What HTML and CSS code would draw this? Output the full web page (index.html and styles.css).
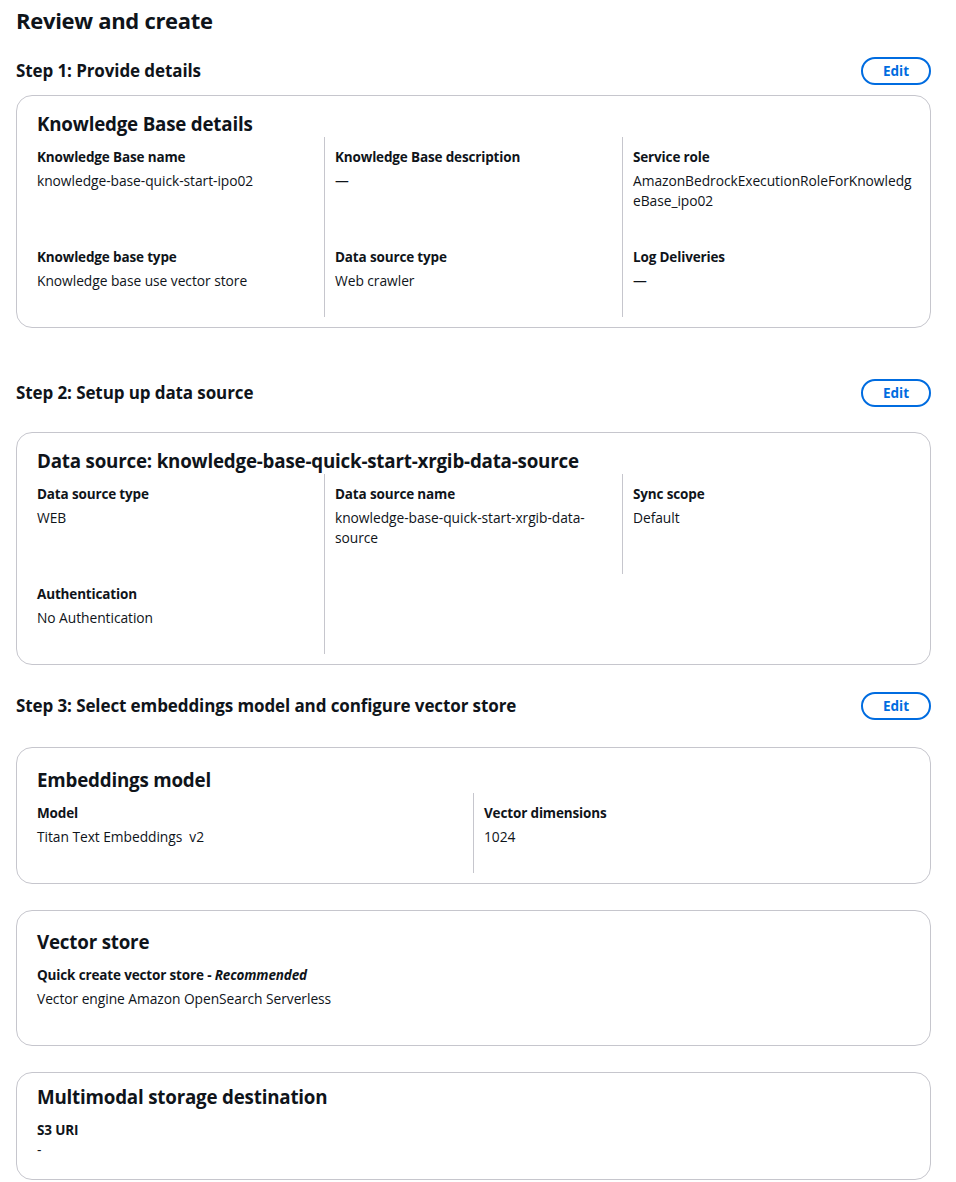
FILE: index.html
```html
<!DOCTYPE html>
<html lang="en">
<head>
<meta charset="utf-8">
<title>Review and create</title>
<link rel="stylesheet" href="styles.css">
</head>
<body>
<main class="page">
  <h1 class="page-title">Review and create</h1>

  <section class="step step-first">
    <div class="step-header">
      <h2 class="step-title">Step 1: Provide details</h2>
      <button class="edit-btn" type="button">Edit</button>
    </div>
    <div class="card">
      <h3 class="card-title">Knowledge Base details</h3>
      <div class="kv-grid cols-3">
        <div class="kv-cell">
          <div class="kv-label">Knowledge Base name</div>
          <div class="kv-value">knowledge-base-quick-start-ipo02</div>
        </div>
        <div class="kv-cell divided">
          <div class="kv-label">Knowledge Base description</div>
          <div class="kv-value">—</div>
        </div>
        <div class="kv-cell divided">
          <div class="kv-label">Service role</div>
          <div class="kv-value">AmazonBedrockExecutionRoleForKnowledgeBase_ipo02</div>
        </div>
        <div class="kv-cell">
          <div class="kv-label">Knowledge base type</div>
          <div class="kv-value">Knowledge base use vector store</div>
        </div>
        <div class="kv-cell divided">
          <div class="kv-label">Data source type</div>
          <div class="kv-value">Web crawler</div>
        </div>
        <div class="kv-cell divided">
          <div class="kv-label">Log Deliveries</div>
          <div class="kv-value">—</div>
        </div>
      </div>
    </div>
  </section>

  <section class="step step-second">
    <div class="step-header">
      <h2 class="step-title">Step 2: Setup up data source</h2>
      <button class="edit-btn" type="button">Edit</button>
    </div>
    <div class="card">
      <h3 class="card-title">Data source: knowledge-base-quick-start-xrgib-data-source</h3>
      <div class="kv-grid cols-3">
        <div class="kv-cell">
          <div class="kv-label">Data source type</div>
          <div class="kv-value">WEB</div>
        </div>
        <div class="kv-cell divided">
          <div class="kv-label">Data source name</div>
          <div class="kv-value">knowledge-base-quick-start-xrgib-data-source</div>
        </div>
        <div class="kv-cell divided">
          <div class="kv-label">Sync scope</div>
          <div class="kv-value">Default</div>
        </div>
        <div class="kv-cell">
          <div class="kv-label">Authentication</div>
          <div class="kv-value">No Authentication</div>
        </div>
        <div class="kv-cell divided"></div>
      </div>
    </div>
  </section>

  <section class="step">
    <div class="step-header">
      <h2 class="step-title">Step 3: Select embeddings model and configure vector store</h2>
      <button class="edit-btn" type="button">Edit</button>
    </div>
    <div class="card card-tall">
      <h3 class="card-title">Embeddings model</h3>
      <div class="kv-grid cols-2">
        <div class="kv-cell">
          <div class="kv-label">Model</div>
          <div class="kv-value">Titan Text Embeddings&nbsp; v2</div>
        </div>
        <div class="kv-cell divided">
          <div class="kv-label">Vector dimensions</div>
          <div class="kv-value">1024</div>
        </div>
      </div>
    </div>

    <div class="card card-tall card-store">
      <h3 class="card-title">Vector store</h3>
      <div class="kv-grid cols-1">
        <div class="kv-cell">
          <div class="kv-label">Quick create vector store - <em>Recommended</em></div>
          <div class="kv-value">Vector engine Amazon OpenSearch Serverless</div>
        </div>
      </div>
    </div>

    <div class="card card-compact">
      <h3 class="card-title">Multimodal storage destination</h3>
      <div class="kv-grid cols-1">
        <div class="kv-cell">
          <div class="kv-label">S3 URI</div>
          <div class="kv-value">-</div>
        </div>
      </div>
    </div>
  </section>
</main>
</body>
</html>
```

FILE: styles.css
```css
* {
  box-sizing: border-box;
}

html, body {
  margin: 0;
  padding: 0;
  background: #ffffff;
}

body {
  font-family: "Open Sans", "Noto Sans", "Liberation Sans", sans-serif;
  color: #0f141a;
  font-size: 14px;
  line-height: 20px;
}

.page {
  width: 915px;
  margin-left: 16px;
  padding-top: 6px;
}

.page-title {
  margin: 0;
  font-size: 22px;
  line-height: 28px;
  font-weight: 700;
  letter-spacing: -0.3px;
}

.step {
  margin-top: 27px;
}

.step-first {
  margin-top: 23px;
}

.step-second {
  margin-top: 51px;
}

.step-header {
  display: flex;
  align-items: center;
  justify-content: space-between;
  height: 28px;
  margin-bottom: 27px;
}

.step-first .step-header {
  margin-bottom: 10px;
}

.step-second .step-header {
  margin-bottom: 25px;
}

.step-title {
  margin: 0;
  font-size: 17px;
  line-height: 22px;
  font-weight: 700;
  letter-spacing: -0.1px;
}

.edit-btn {
  width: 70px;
  height: 28px;
  border: 2px solid #006ce0;
  border-radius: 20px;
  background: #ffffff;
  color: #006ce0;
  font-family: inherit;
  font-size: 13.5px;
  font-weight: 700;
  line-height: 20px;
  padding: 0;
  cursor: pointer;
}

.card {
  border: 1px solid #c6c6cd;
  border-radius: 16px;
  padding: 16px 20px 10px;
  margin-bottom: 26px;
}

.card-tall {
  padding-top: 20px;
}

.card-store {
  padding-top: 19px;
}

.card-compact {
  padding-top: 12px;
  padding-bottom: 19px;
  margin-bottom: 0;
}

.card-title {
  margin: 0 0 1px;
  font-size: 18.75px;
  line-height: 24px;
  font-weight: 700;
  letter-spacing: -0.2px;
}

.kv-grid {
  display: grid;
  margin: 0 -10px 0 -11px;
}

.cols-3 {
  grid-template-columns: repeat(3, 1fr);
}

.cols-2 {
  grid-template-columns: repeat(2, 1fr);
}

.cols-1 {
  grid-template-columns: 1fr;
}

.kv-cell {
  padding: 10px 8px 26px 11px;
  min-width: 0;
}

.kv-cell.divided {
  border-left: 1px solid #c6c6cd;
  padding-left: 10px;
}

.kv-label {
  font-weight: 700;
  font-size: 13.5px;
  line-height: 20px;
  letter-spacing: -0.15px;
}

.kv-label em {
  font-style: italic;
}

.kv-value {
  margin-top: 4px;
  font-size: 13.8px;
  line-height: 20px;
  letter-spacing: -0.05px;
  overflow-wrap: anywhere;
}

.card-compact .kv-cell {
  padding-bottom: 0;
}

.card-compact .kv-value {
  margin-top: 0;
}
```
